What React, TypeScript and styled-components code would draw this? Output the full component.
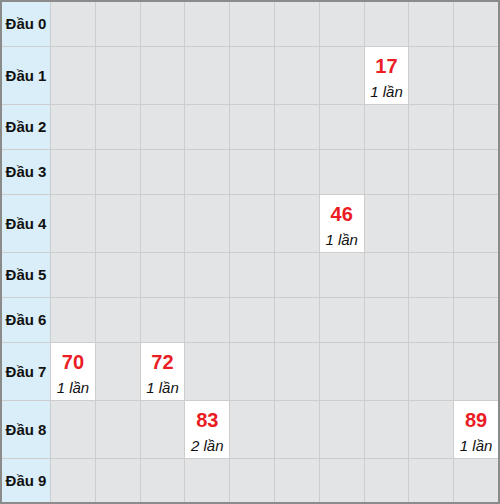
import styled, { createGlobalStyle } from 'styled-components';

const GlobalStyle = createGlobalStyle`
    html, body {
        margin: 0;
        padding: 0;
        background: #ffffff;
    }
    body {
        font-family: 'Liberation Sans', Arial, sans-serif;
    }
`;

type Hit = { value: string; count: number };

// hits[head][tail]
const hits: Record<number, Record<number, Hit>> = {
    1: { 7: { value: '17', count: 1 } },
    4: { 6: { value: '46', count: 1 } },
    7: { 0: { value: '70', count: 1 }, 2: { value: '72', count: 1 } },
    8: { 3: { value: '83', count: 2 }, 9: { value: '89', count: 1 } },
};

const Board = styled.div<{ $rows: string }>`
    box-sizing: border-box;
    width: 500px;
    height: 504px;
    border: 2px solid #8b8b8b;
    background: #cdcdcd;
    display: grid;
    grid-template-columns: 48px repeat(10, 1fr);
    grid-template-rows: ${(p) => p.$rows};
    gap: 1px;
`;

const HeadCell = styled.div`
    background: #d9eef8;
    display: flex;
    align-items: center;
    justify-content: center;
    font-weight: bold;
    font-size: 15px;
    color: #111;
    padding-bottom: 1px;
`;

const Cell = styled.div<{ $filled?: boolean }>`
    background: ${(p) => (p.$filled ? '#ffffff' : '#e3e4e6')};
    display: flex;
    flex-direction: column;
    align-items: center;
    justify-content: center;
    gap: 6px;
    padding-top: 3px;
`;

const Number = styled.span`
    color: #ea1c24;
    font-weight: bold;
    font-size: 20px;
    line-height: 22px;
`;

const Times = styled.span`
    font-style: italic;
    font-size: 15px;
    line-height: 17px;
    color: #111;
`;

export default function App() {
    const rowHeights = Array.from({ length: 10 }, (_, i) =>
        i === 9 ? '43px' : hits[i] ? '57px' : '44px',
    ).join(' ');

    return (
        <>
            <GlobalStyle />
            <Board $rows={rowHeights}>
                {Array.from({ length: 10 }, (_, head) => (
                    <>
                        <HeadCell key={`h${head}`}>Đầu {head}</HeadCell>
                        {Array.from({ length: 10 }, (_, tail) => {
                            const hit = hits[head]?.[tail];
                            return (
                                <Cell key={`${head}-${tail}`} $filled={!!hit}>
                                    {hit && (
                                        <>
                                            <Number>{hit.value}</Number>
                                            <Times>{hit.count} lần</Times>
                                        </>
                                    )}
                                </Cell>
                            );
                        })}
                    </>
                ))}
            </Board>
        </>
    );
}
